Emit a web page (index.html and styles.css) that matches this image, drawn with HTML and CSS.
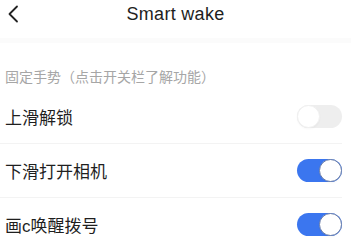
FILE: index.html
```html
<!DOCTYPE html>
<html lang="zh-CN">
<head>
  <meta charset="UTF-8">
  <title>Smart wake</title>
  <link rel="stylesheet" href="styles.css">
</head>
<body>
  <div class="header">
    <svg class="back" width="12" height="18" viewBox="0 0 12 18">
      <path d="M10 1.5 L2.5 9 L10 16.5" fill="none" stroke="#222" stroke-width="1.8" stroke-linecap="round" stroke-linejoin="round"/>
    </svg>
    <div class="title">Smart wake</div>
  </div>
  <div class="gap"></div>

  <div class="section-label">固定手势（点击开关栏了解功能）</div>

  <div class="list">
    <div class="row">
      <span class="row-text">上滑解锁</span>
      <span class="switch"><span class="knob"></span></span>
    </div>
    <div class="row">
      <span class="row-text">下滑打开相机</span>
      <span class="switch on"><span class="knob"></span></span>
    </div>
    <div class="row">
      <span class="row-text">画c唤醒拨号</span>
      <span class="switch on"><span class="knob"></span></span>
    </div>
  </div>
</body>
</html>
```

FILE: styles.css
```css
body, html {
  margin: 0;
  padding: 0;
  background: #fff;
  overflow: hidden;
}
body {
  font-family: "Liberation Sans", "Noto Sans CJK SC", sans-serif;
  color: #222;
}
.header {
  height: 38px;
  display: flex;
  align-items: flex-start;
  justify-content: center;
  position: relative;
}
.back {
  position: absolute;
  left: 7px;
  top: 5px;
}
.title {
  font-size: 18px;
  line-height: 18px;
  margin-top: 5px;
  letter-spacing: 0.3px;
  color: #1e1e1e;
}
.gap {
  height: 5px;
  background: #fbfbfb;
}
.section-label {
  padding: 25px 0 0 5px;
  height: 22px;
  font-size: 14px;
  line-height: 18px;
  color: #a6a6a6;
}
.list {
  padding-right: 9px;
}
.row {
  height: 53px;
  display: flex;
  align-items: center;
  justify-content: space-between;
  padding-left: 5px;
  border-bottom: 1px solid #f3f3f3;
}
.row:last-child {
  border-bottom: none;
}
.row-text {
  font-size: 17px;
  color: #1f1f1f;
}
.switch {
  width: 45px;
  height: 23px;
  border-radius: 12px;
  background: #eeeeee;
  position: relative;
  box-sizing: border-box;
}
.switch .knob {
  position: absolute;
  left: 0;
  top: 0;
  width: 23px;
  height: 23px;
  border-radius: 50%;
  background: #fff;
  box-sizing: border-box;
  border: 1px solid #f0f0f0;
  box-shadow: 0 1px 2px rgba(0,0,0,0.03);
}
.switch.on {
  background: #3b76ef;
}
.switch.on .knob {
  left: auto;
  right: 0;
  border: 1px solid #6b7ea8;
}
```
